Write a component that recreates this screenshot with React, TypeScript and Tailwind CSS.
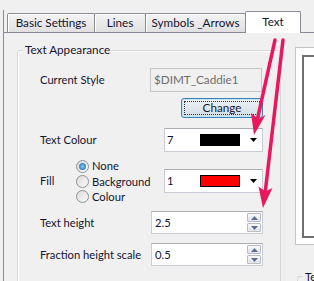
import React from "react";

function Tab({ label, w, selected, first }: { label: string; w: string; selected?: boolean; first?: boolean }) {
  if (selected) {
    return (
      <div
        className={`${w} h-[22px] -mb-px -ml-px relative z-10 bg-white border border-b-0 border-[#898c95] flex items-center justify-center pb-[1px] rounded-t-[2px]`}
      >
        {label}
      </div>
    );
  }
  return (
    <div
      className={`${w} h-[19px] ${first ? "" : "-ml-px"} border border-b-0 border-[#898c95] bg-linear-to-b from-[#f4f4f4] to-[#e0e0e0] shadow-[inset_1px_1px_0_#ffffff] flex items-center justify-center rounded-t-[2px]`}
    >
      {label}
    </div>
  );
}

function Radio({ checked }: { checked?: boolean }) {
  return (
    <span className="w-[13px] h-[13px] rounded-full border border-[#8e8f8f] bg-linear-to-br from-[#dcdcdc] to-[#fafafa] flex items-center justify-center shrink-0">
      {checked && <span className="w-[7px] h-[7px] rounded-full bg-radial from-[#86d0f5] to-[#0c5aa6]" />}
    </span>
  );
}

function DropArrow() {
  return (
    <svg width="7" height="4" viewBox="0 0 7 4" className="ml-auto mr-[5px]">
      <polygon points="0,0 7,0 3.5,4" fill="#000" />
    </svg>
  );
}

function Combo({ value, swatch }: { value: string; swatch: string }) {
  return (
    <div className="w-[99px] h-[24px] shrink-0 bg-white border border-[#c9ccd2] border-t-[#abadb3] flex items-center pl-[2px]">
      <span className="w-[33px]">{value}</span>
      <span className={`w-[40px] h-[12px] ${swatch}`} />
      <DropArrow />
    </div>
  );
}

function SpinBtn({ up }: { up?: boolean }) {
  return (
    <div className="w-[14px] h-[9px] border border-[#b9bcc4] rounded-[1px] bg-linear-to-b from-[#f8f8f8] to-[#e2e4ea] flex items-center justify-center">
      <svg width="7" height="4" viewBox="0 0 7 4">
        <polygon points={up ? "0,4 7,4 3.5,0" : "0,0 7,0 3.5,4"} fill="#5b6e98" />
      </svg>
    </div>
  );
}

function Spin({ value }: { value: string }) {
  return (
    <div className="w-[112px] h-[23px] shrink-0 bg-white border border-[#c9ccd2] border-t-[#abadb3] flex items-center pl-[3px]">
      <span>{value}</span>
      <div className="ml-auto mr-px flex flex-col gap-px">
        <SpinBtn up />
        <SpinBtn />
      </div>
    </div>
  );
}

export default function App() {
  const pink = "#e8185e";
  return (
    <div className="relative w-[314px] h-[281px] overflow-hidden bg-[#f0f0f0] text-[11.2px] leading-none whitespace-nowrap text-[#141430] font-[Lato,'Liberation_Sans',sans-serif] flex flex-col">
      <div className="ml-[3px] mt-[10px] flex-1 border-l border-[#898c95] flex flex-col">
        {/* tabs */}
        <div className="h-[23px] pl-[3px] flex items-end border-b border-[#898c95] text-[11.7px]">
          <Tab label="Basic Settings" w="w-[88px]" first />
          <Tab label="Lines" w="w-[52px]" />
          <Tab label="Symbols _Arrows" w="w-[101px]" />
          <Tab label="Text" w="w-[56px]" selected />
        </div>
        {/* panel */}
        <div className="flex flex-1">
          {/* group box */}
          <div className="relative ml-[13px] mt-[17px] w-[264px] h-[260px] shrink-0 border border-[#d3d8dc] rounded-[3px] shadow-[inset_1px_1px_0_#ffffff]">
            <span className="absolute -top-[7px] left-[5px] px-[2px] bg-[#f0f0f0] text-[11.7px]">Text Appearance</span>
            <div className="pl-[22px] flex flex-col">
              <div className="mt-[17px] h-[24px] flex items-center">
                <span className="w-[110px] shrink-0">Current Style</span>
                <div className="w-[112px] h-[24px] shrink-0 border border-[#c6c6c6] flex items-center pl-[3px] text-[#6d6d6d] text-[11.7px]">
                  $DIMT_Caddie1
                </div>
              </div>
              <div className="mt-[6px] h-[20px] flex">
                <div className="ml-[141px] w-[82px] h-[20px] rounded-[3px] border border-[#3c7fb1] bg-linear-to-b from-[#eef3f7] to-[#d2dde5] shadow-[inset_0_0_0_1px_#c4e5f6] p-[2px]">
                  <div className="w-full h-full border border-dotted border-[#333] flex items-center justify-center text-[11.7px]">
                    Change
                  </div>
                </div>
              </div>
              <div className="mt-[10px] h-[24px] flex items-center">
                <span className="w-[124px] shrink-0">Text Colour</span>
                <Combo value="7" swatch="bg-black" />
              </div>
              <div className="mt-[6px] h-[46px] flex items-center">
                <span className="w-[36px] shrink-0">Fill</span>
                <div className="w-[88px] shrink-0 flex flex-col">
                  <div className="h-[16px] flex items-center gap-[3px]">
                    <Radio checked />
                    <span>None</span>
                  </div>
                  <div className="h-[15px] flex items-center gap-[3px]">
                    <Radio />
                    <span>Background</span>
                  </div>
                  <div className="h-[15px] flex items-center gap-[3px]">
                    <Radio />
                    <span>Colour</span>
                  </div>
                </div>
                <Combo value="1" swatch="bg-[#ff0000] border border-black" />
              </div>
              <div className="mt-[7px] h-[23px] flex items-center">
                <span className="w-[111px] shrink-0">Text height</span>
                <Spin value="2.5" />
              </div>
              <div className="mt-[9px] h-[23px] flex items-center">
                <span className="w-[111px] shrink-0">Fraction height scale</span>
                <Spin value="0.5" />
              </div>
            </div>
          </div>
          {/* right column */}
          <div className="ml-[14px] w-[60px] shrink-0 flex flex-col">
            <div className="mt-[14px] h-[198px] bg-white border border-[#c4c4c4] pl-[6px] pt-[7px] pb-[6px]">
              <div className="w-full h-full border-2 border-[#707070] bg-white" />
            </div>
            <div className="relative mt-[31px] ml-[2px] h-[40px] border-l border-t border-[#d3d8dc] rounded-tl-[3px]">
              <span className="absolute -top-[6px] left-[5px] px-[2px] bg-[#f0f0f0]">Text</span>
            </div>
          </div>
        </div>
      </div>
      {/* annotation arrows */}
      <svg className="absolute inset-0 pointer-events-none" width="314" height="281" viewBox="0 0 314 281">
        <line x1="275" y1="40" x2="257" y2="121" stroke={pink} strokeWidth="3.5" strokeLinecap="round" />
        <polygon points="254,135 265.5,115 258.5,119 251,113" fill={pink} />
        <line x1="283" y1="40" x2="265" y2="194" stroke={pink} strokeWidth="3.5" strokeLinecap="round" />
        <polygon points="263,208 272.5,188 265.5,191.5 258.5,186.5" fill={pink} />
      </svg>
    </div>
  );
}
